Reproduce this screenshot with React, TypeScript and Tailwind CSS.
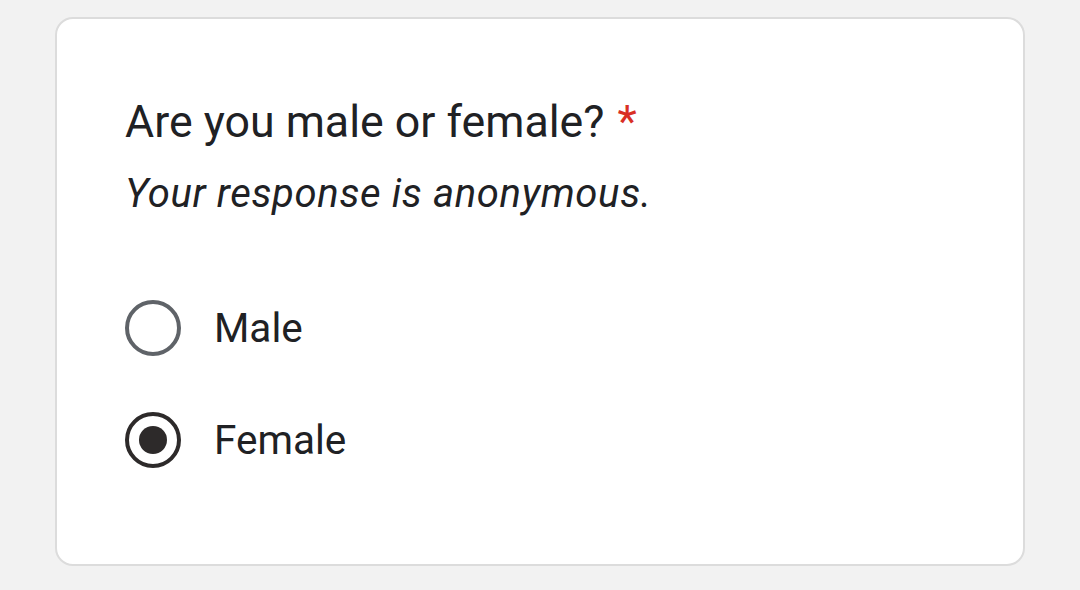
import React from "react";

export default function App() {
  return (
    <div
      className="w-[1080px] h-[590px] bg-[#f2f2f2] pt-[17px] pl-[55px]"
      style={{ fontFamily: "Roboto, 'Liberation Sans', sans-serif" }}
    >
      <div className="w-[970px] h-[549px] bg-white border-2 border-[#dcdcdc] rounded-[18px] pl-[68px] pt-[77px]">
        <div className="text-[44.7px] leading-[52px] text-[#202124]">
          Are you male or female?{" "}
          <span className="text-[#d93025] ml-[2px]">*</span>
        </div>
        <div className="mt-[24px] text-[40px] leading-[44px] italic tracking-[0.65px] text-[#202124]">
          Your response is anonymous.
        </div>
        <div className="mt-[84px] flex flex-col gap-[56px]">
          <label className="flex items-center h-[56px]">
            <span className="w-[56px] h-[56px] rounded-full border-[4px] border-[#5f6368] box-border" />
            <span className="ml-[33px] text-[40.5px] leading-[48px] text-[#202124]">Male</span>
          </label>
          <label className="flex items-center h-[56px]">
            <span className="w-[56px] h-[56px] rounded-full border-[4px] border-[#2d2a2a] box-border flex items-center justify-center">
              <span className="w-[28px] h-[28px] rounded-full bg-[#2d2a2a]" />
            </span>
            <span className="ml-[33px] text-[40.5px] leading-[48px] text-[#202124]">Female</span>
          </label>
        </div>
      </div>
    </div>
  );
}
